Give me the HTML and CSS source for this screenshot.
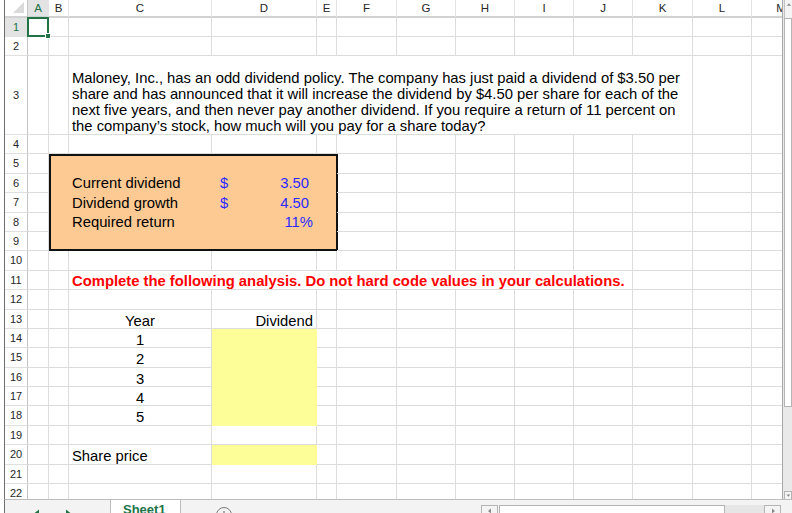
FILE: index.html
```html
<!DOCTYPE html>
<html>
<head>
<meta charset="utf-8">
<link rel="stylesheet" href="styles.css">
</head>
<body>
<div class="app">
  <div class="main">
    <div class="sheet">
      <!-- header row -->
      <b class="corner"><span class="tri"></span></b><b class="ch on">A</b><b class="ch">B</b><b class="ch">C</b><b class="ch">D</b><b class="ch">E</b><b class="ch">F</b><b class="ch">G</b><b class="ch">H</b><b class="ch">I</b><b class="ch">J</b><b class="ch">K</b><b class="ch">L</b><b class="ch">M</b>
      <!-- 1 -->
      <b class="rh on">1</b><i class="sel"></i><i></i><i></i><i></i><i></i><i></i><i></i><i></i><i></i><i></i><i></i><i></i><i></i>
      <!-- 2 -->
      <b class="rh">2</b><i></i><i></i><i></i><i></i><i></i><i></i><i></i><i></i><i></i><i></i><i></i><i></i><i></i>
      <!-- 3 -->
      <b class="rh">3</b><i></i><i></i><div class="intro">Maloney, Inc., has an odd dividend policy. The company has just paid a dividend of $3.50 per<br>share and has announced that it will increase the dividend by $4.50 per share for each of the<br>next five years, and then never pay another dividend. If you require a return of 11 percent on<br>the company’s stock, how much will you pay for a share today?</div><i></i><i></i>
      <!-- 4 -->
      <b class="rh">4</b><i></i><i></i><i></i><i></i><i></i><i></i><i></i><i></i><i></i><i></i><i></i><i></i><i></i>
      <!-- 5 -->
      <b class="rh">5</b><i></i>
      <div class="inputs">
        <div class="obr"><span class="lbl">Current dividend</span><span class="val"><span>$</span><span>3.50</span></span></div>
        <div class="obr"><span class="lbl">Dividend growth</span><span class="val"><span>$</span><span>4.50</span></span></div>
        <div class="obr"><span class="lbl">Required return</span><span class="val pct"><span>11%</span></span></div>
      </div>
      <i></i><i></i><i></i><i></i><i></i><i></i><i></i><i></i>
      <!-- 6 -->
      <b class="rh">6</b><i></i><i></i><i></i><i></i><i></i><i></i><i></i><i></i><i></i>
      <!-- 7 -->
      <b class="rh">7</b><i></i><i></i><i></i><i></i><i></i><i></i><i></i><i></i><i></i>
      <!-- 8 -->
      <b class="rh">8</b><i></i><i></i><i></i><i></i><i></i><i></i><i></i><i></i><i></i>
      <!-- 9 -->
      <b class="rh">9</b><i></i><i></i><i></i><i></i><i></i><i></i><i></i><i></i><i></i>
      <!-- 10 -->
      <b class="rh">10</b><i></i><i></i><i></i><i></i><i></i><i></i><i></i><i></i><i></i><i></i><i></i><i></i><i></i>
      <!-- 11 -->
      <b class="rh">11</b><i></i><i></i><div class="note">Complete the following analysis. Do not hard code values in your calculations.</div><i></i><i></i><i></i>
      <!-- 12 -->
      <b class="rh">12</b><i></i><i></i><i></i><i></i><i></i><i></i><i></i><i></i><i></i><i></i><i></i><i></i><i></i>
      <!-- 13 -->
      <b class="rh">13</b><i></i><i></i><span class="t ctr">Year</span><span class="t rgt">Dividend</span><i></i><i></i><i></i><i></i><i></i><i></i><i></i><i></i><i></i>
      <!-- 14 -->
      <b class="rh">14</b><i></i><i></i><span class="t ctr">1</span><div class="fill tall"></div><i></i><i></i><i></i><i></i><i></i><i></i><i></i><i></i><i></i>
      <!-- 15 -->
      <b class="rh">15</b><i></i><i></i><span class="t ctr">2</span><i></i><i></i><i></i><i></i><i></i><i></i><i></i><i></i><i></i>
      <!-- 16 -->
      <b class="rh">16</b><i></i><i></i><span class="t ctr">3</span><i></i><i></i><i></i><i></i><i></i><i></i><i></i><i></i><i></i>
      <!-- 17 -->
      <b class="rh">17</b><i></i><i></i><span class="t ctr">4</span><i></i><i></i><i></i><i></i><i></i><i></i><i></i><i></i><i></i>
      <!-- 18 -->
      <b class="rh">18</b><i></i><i></i><span class="t ctr">5</span><i></i><i></i><i></i><i></i><i></i><i></i><i></i><i></i><i></i>
      <!-- 19 -->
      <b class="rh">19</b><i></i><i></i><i></i><i></i><i></i><i></i><i></i><i></i><i></i><i></i><i></i><i></i><i></i>
      <!-- 20 -->
      <b class="rh">20</b><i></i><i></i><span class="t">Share price</span><div class="fill"></div><i></i><i></i><i></i><i></i><i></i><i></i><i></i><i></i><i></i>
      <!-- 21 -->
      <b class="rh">21</b><i></i><i></i><i></i><i></i><i></i><i></i><i></i><i></i><i></i><i></i><i></i><i></i><i></i>
      <!-- 22 -->
      <b class="rh">22</b><i></i><i></i><i></i><i></i><i></i><i></i><i></i><i></i><i></i><i></i><i></i><i></i><i></i>
    </div>
    <div class="vscroll">
      <div class="vup"><svg width="8" height="8" viewBox="0 0 8 8"><polygon points="2,6 4.5,3 7,6" fill="#8a8a8a"/></svg></div>
      <div class="vthumb"></div>
      <div class="vgap"></div>
      <div class="vdown"><svg width="8" height="7" viewBox="0 0 8 7"><polygon points="2,2 7,2 4.5,5" fill="#8a8a8a"/></svg></div>
    </div>
  </div>
  <div class="tabbar">
    <div class="nav">
      <svg width="105" height="14" viewBox="0 0 105 14"><polygon points="29,13.5 34,9.5 34,17.5" fill="#217346"/><polygon points="61,9.5 66,13.5 61,17.5" fill="#217346"/></svg>
    </div>
    <div class="tab">Sheet1</div>
    <div class="add">
      <svg width="18" height="18" viewBox="0 0 18 18"><circle cx="9" cy="9" r="7.5" fill="none" stroke="#7a7a7a" stroke-width="1"/><path d="M9 5v8M5 9h8" stroke="#7a7a7a" stroke-width="1.2"/></svg>
    </div>
    <div class="hscroll">
      <div class="hbtn"><svg width="15" height="8" viewBox="0 0 15 8"><polygon points="6,5 9,2.5 9,7.5" fill="#8a8a8a"/></svg></div>
      <div class="htrack"></div>
      <div class="hgap"></div>
      <div class="hbtn"><svg width="15" height="8" viewBox="0 0 15 8"><polygon points="7,2.5 10,5 7,7.5" fill="#8a8a8a"/></svg></div>
    </div>
  </div>
</div>
</body>
</html>
```
FILE: styles.css
```css
html, body {
  margin: 0;
  padding: 0;
  background: #ffffff;
}

body {
  font-family: "Liberation Sans", Arial, sans-serif;
  color: #000;
}

.app {
  width: 792px;
  height: 513px;
  overflow: hidden;
  padding-left: 4px;
  box-sizing: border-box;
}

.main {
  display: flex;
  height: 499px;
  border-left: 1px solid #6e6e6e;
}

.sheet {
  display: grid;
  grid-template-columns: 23px 21px 20px 143px 105px 20px 60px 59px 59px 59px 59px 60px 59px 59px;
  grid-template-rows: 18px 19px 19px 79px repeat(19, 19.4px);
  width: 777px;
  height: 499px;
  overflow: hidden;
  flex: none;
}

.sheet > * {
  box-sizing: border-box;
  border-right: 1px solid #dcdcdc;
  border-bottom: 1px solid #dcdcdc;
  font-style: normal;
  font-weight: normal;
  min-width: 0;
  white-space: nowrap;
  font-size: 14.8px;
  line-height: 18.4px;
}

/* headers */
.corner {
  display: flex;
  justify-content: flex-end;
  align-items: flex-end;
  border-right: 1px solid #c4c4c4 !important;
  border-bottom: 2px solid #d2d2d2 !important;
  padding: 0 3px 3px 0;
}
.tri {
  width: 0;
  height: 0;
  border-left: 11px solid transparent;
  border-bottom: 11px solid #dadada;
}
.ch {
  font-size: 11.5px !important;
  line-height: 16px !important;
  text-align: center;
  color: #262626;
  border-bottom: 2px solid #d2d2d2 !important;
  border-right: 1px solid #e4e4e4 !important;
}
.rh {
  font-size: 11px !important;
  display: flex;
  align-items: center;
  justify-content: center;
  color: #262626;
  border-right: 1px solid #c4c4c4 !important;
  border-bottom: 1px solid #e0e0e0 !important;
}
.ch.on, .rh.on {
  background: #e3e3e3;
  color: #217346;
}

/* selection */
.sel {
  position: relative;
}
.sel::after {
  content: "";
  position: absolute;
  left: -1px;
  top: -1px;
  right: -1px;
  bottom: -1px;
  border: 2px solid #217346;
}
.sel::before {
  content: "";
  position: absolute;
  right: -3px;
  bottom: -3px;
  width: 4px;
  height: 4px;
  background: #217346;
  border: 1px solid #fff;
  z-index: 2;
}

/* content cells */
.intro {
  grid-column: span 9;
  white-space: nowrap;
  display: flex;
  align-items: flex-end;
  padding: 0 0 0 3px;
  line-height: 16px !important;
  overflow: visible;
}
.inputs {
  grid-column: span 4;
  grid-row: span 5;
  background: #fdca94;
  border: 2px solid #111 !important;
  margin-right: -1px;
  padding-top: 17.8px;
}
.obr {
  display: grid;
  grid-template-columns: 18px 143px 105px;
  height: 19.4px;
  line-height: 19.4px;
}
.lbl {
  grid-column: 2;
  padding-left: 3px;
}
.val {
  grid-column: 3;
  display: flex;
  justify-content: space-between;
  padding: 0 8px;
  color: #2a2aff;
}
.val.pct {
  justify-content: flex-end;
  padding-right: 4px;
}
.note {
  grid-column: span 8;
  background: #fff;
  color: #ff0000;
  font-weight: bold !important;
  padding: 1.5px 0 0 3px;
  line-height: 19.4px !important;
}
.t {
  padding: 2px 3px 0;
  line-height: 19.4px !important;
}
.ctr { text-align: center; }
.rgt { text-align: right; }
.fill {
  background: #fefe98;
  border: none !important;
}
.fill.tall {
  grid-row: span 5;
}

/* vertical scrollbar */
.vscroll {
  width: 10px;
  flex: none;
  box-sizing: border-box;
  border-left: 1px solid #a8a8a8;
  background: #e9e9e9;
  display: flex;
  flex-direction: column;
  padding-left: 1px;
}
.vup {
  height: 18px;
  flex: none;
  background: #f4f4f4;
  border-left: 1px solid #c2c2c2;
  box-sizing: border-box;
  display: flex;
  justify-content: flex-end;
}
.vthumb {
  height: 389px;
  flex: none;
  background: #fff;
  border: 1px solid #b4b4b4;
  box-sizing: border-box;
}
.vgap {
  flex: 1;
}
.vdown {
  height: 8px;
  flex: none;
  background: #f4f4f4;
  border: 1px solid #b4b4b4;
  border-bottom: none;
  box-sizing: border-box;
  display: flex;
  justify-content: flex-end;
  overflow: hidden;
}

/* bottom tab bar */
.tabbar {
  height: 14px;
  display: flex;
  background: #f3f3f3;
  border-left: 1px solid #6e6e6e;
  border-top: 1px solid #bdbdbd;
  box-sizing: border-box;
  overflow: hidden;
}
.nav {
  width: 105px;
  flex: none;
  border-right: 1px solid #bdbdbd;
  overflow: hidden;
}
.nav svg { display: block; }
.tab {
  width: 70px;
  flex: none;
  background: #fff;
  border-right: 1px solid #bdbdbd;
  margin-top: -1px;
  height: 16px;
  box-sizing: border-box;
  padding: 4px 0 0 12px;
  font-size: 13px;
  line-height: 13px;
  font-weight: bold;
  color: #217346;
}
.add {
  width: 300px;
  flex: none;
  padding: 6px 0 0 34px;
  box-sizing: border-box;
}
.add svg { display: block; }
.hscroll {
  display: flex;
  flex: none;
  margin-top: 5px;
  height: 14px;
}
.hbtn {
  width: 17px;
  height: 14px;
  box-sizing: border-box;
  border: 1px solid #b4b4b4;
  background: #f4f4f4;
}
.hbtn svg { display: block; }
.htrack {
  width: 226px;
  margin-left: 1px;
  height: 14px;
  box-sizing: border-box;
  border: 1px solid #b4b4b4;
  background: #fff;
}
.hgap {
  width: 39px;
  background: #e6e6e6;
}
```
